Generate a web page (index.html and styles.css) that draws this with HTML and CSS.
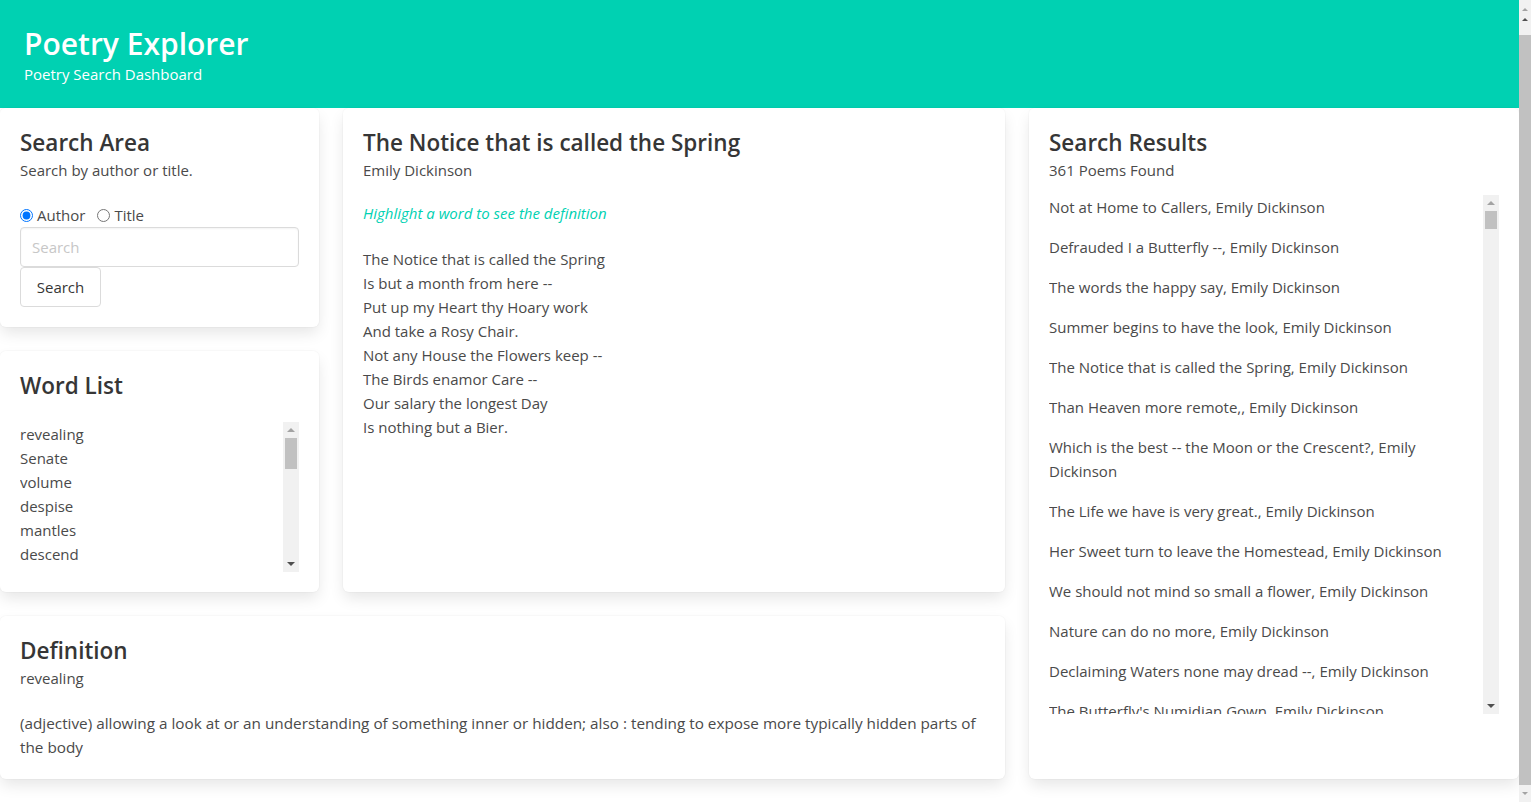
FILE: index.html
```html
<!DOCTYPE html>
<html lang="en">
<head>
<meta charset="utf-8">
<title>Poetry Explorer</title>
<link rel="stylesheet" href="styles.css">
</head>
<body>
<div class="page">
  <header class="hero">
    <h1 class="hero-title">Poetry Explorer</h1>
    <p class="hero-subtitle">Poetry Search Dashboard</p>
  </header>
  <main class="dashboard">
    <section class="box search-box">
      <h2 class="title">Search Area</h2>
      <p class="subtitle">Search by author or title.</p>
      <div class="radios">
        <label class="radio"><input type="radio" name="mode" checked> Author</label>
        <label class="radio"><input type="radio" name="mode"> Title</label>
      </div>
      <input class="input" type="text" placeholder="Search">
      <button class="button" type="button">Search</button>
    </section>

    <section class="box poem-box">
      <h2 class="title">The Notice that is called the Spring</h2>
      <p class="subtitle">Emily Dickinson</p>
      <p class="hint">Highlight a word to see the definition</p>
      <div class="poem">
        <div>The Notice that is called the Spring</div>
        <div>Is but a month from here --</div>
        <div>Put up my Heart thy Hoary work</div>
        <div>And take a Rosy Chair.</div>
        <div>Not any House the Flowers keep --</div>
        <div>The Birds enamor Care --</div>
        <div>Our salary the longest Day</div>
        <div>Is nothing but a Bier.</div>
      </div>
    </section>

    <section class="box results-box">
      <h2 class="title">Search Results</h2>
      <p class="subtitle">361 Poems Found</p>
      <div class="scroll-wrap results-wrap">
        <ul class="results">
          <li>Not at Home to Callers, Emily Dickinson</li>
          <li>Defrauded I a Butterfly --, Emily Dickinson</li>
          <li>The words the happy say, Emily Dickinson</li>
          <li>Summer begins to have the look, Emily Dickinson</li>
          <li>The Notice that is called the Spring, Emily Dickinson</li>
          <li>Than Heaven more remote,, Emily Dickinson</li>
          <li>Which is the best -- the Moon or the Crescent?, Emily Dickinson</li>
          <li>The Life we have is very great., Emily Dickinson</li>
          <li>Her Sweet turn to leave the Homestead, Emily Dickinson</li>
          <li>We should not mind so small a flower, Emily Dickinson</li>
          <li>Nature can do no more, Emily Dickinson</li>
          <li>Declaiming Waters none may dread --, Emily Dickinson</li>
          <li>The Butterfly's Numidian Gown, Emily Dickinson</li>
          <li>A Bird came down the Walk --, Emily Dickinson</li>
        </ul>
        <div class="vscroll">
          <span class="arrow"><span class="tri up light"></span></span>
          <span class="thumb results-thumb"></span>
          <span class="track-fill"></span>
          <span class="arrow"><span class="tri down"></span></span>
        </div>
      </div>
    </section>

    <section class="box words-box">
      <h2 class="title words-title">Word List</h2>
      <div class="scroll-wrap words-wrap">
        <ul class="words">
          <li>revealing</li>
          <li>Senate</li>
          <li>volume</li>
          <li>despise</li>
          <li>mantles</li>
          <li>descend</li>
          <li>summer</li>
          <li>crescent</li>
        </ul>
        <div class="vscroll">
          <span class="arrow"><span class="tri up light"></span></span>
          <span class="thumb words-thumb"></span>
          <span class="track-fill"></span>
          <span class="arrow"><span class="tri down"></span></span>
        </div>
      </div>
    </section>

    <section class="box definition-box">
      <h2 class="title">Definition</h2>
      <p class="subtitle">revealing</p>
      <p class="definition">(adjective) allowing a look at or an understanding of something inner or hidden; also : tending to expose more typically hidden parts of the body</p>
    </section>
  </main>
</div>
<div class="page-scroll">
  <span class="page-scroll-top">
    <span class="tri up small light"></span>
    <span class="tri up small"></span>
  </span>
  <span class="page-thumb"></span>
  <span class="page-scroll-bottom"><span class="tri down small light"></span></span>
</div>
</body>
</html>
```
FILE: styles.css
```css
body {
  margin: 0;
  background: #ffffff;
  font-family: "Open Sans", "Noto Sans", sans-serif;
  font-size: 15px;
  line-height: 24px;
  color: #4a4a4a;
  display: flex;
  align-items: flex-start;
}
.page {
  flex: 1;
  min-width: 0;
}
.hero {
  background: #00d1b2;
  color: #ffffff;
  padding: 24px 24px 22px;
  height: 108px;
  box-sizing: border-box;
}
.hero-title {
  margin: 0;
  font-size: 30px;
  line-height: 40px;
  font-weight: 600;
}
.hero-subtitle {
  margin: 0;
  font-size: 15px;
  line-height: 21px;
}
.dashboard {
  display: grid;
  grid-template-columns: 319fr 662fr 490fr;
  grid-template-rows: auto auto auto;
  column-gap: 24px;
  row-gap: 24px;
  padding-bottom: 40px;
}
.box {
  background: #ffffff;
  border-radius: 6px;
  box-shadow: 0 0.5em 1em -0.125em rgba(10, 10, 10, 0.1), 0 0 0 1px rgba(10, 10, 10, 0.02);
  padding: 20px;
  min-width: 0;
}
.search-box { grid-column: 1; grid-row: 1; }
.words-box { grid-column: 1; grid-row: 2; }
.poem-box { grid-column: 2; grid-row: 1 / span 2; }
.results-box { grid-column: 3; grid-row: 1 / span 3; }
.definition-box { grid-column: 1 / span 2; grid-row: 3; }

.title {
  margin: 0;
  font-size: 22.5px;
  line-height: 30px;
  font-weight: 600;
  color: #363636;
}
.subtitle {
  margin: 0;
  font-size: 15px;
  line-height: 24px;
  color: #4a4a4a;
}
.radios {
  margin-top: 21px;
  display: flex;
  gap: 12px;
  line-height: 24px;
}
.radio {
  display: inline-flex;
  align-items: center;
  gap: 4px;
}
.radio input {
  margin: 0;
  width: 13px;
  height: 13px;
}
.input {
  display: block;
  box-sizing: border-box;
  width: 100%;
  height: 40px;
  margin: 0;
  padding: 0 11px;
  border: 1px solid #dbdbdb;
  border-radius: 4px;
  font-family: inherit;
  font-size: 15px;
  color: #363636;
  box-shadow: inset 0 0.0625em 0.125em rgba(10, 10, 10, 0.05);
}
.input::placeholder {
  color: #c7c7c7;
}
.button {
  display: block;
  box-sizing: border-box;
  height: 40px;
  width: 81px;
  margin: 0;
  padding: 0;
  border: 1px solid #dbdbdb;
  border-radius: 4px;
  background: #ffffff;
  font-family: inherit;
  font-size: 15px;
  color: #363636;
}

/* scroll areas with drawn scrollbars */
.scroll-wrap {
  display: flex;
}
.words-wrap {
  height: 150px;
}
.results-wrap {
  height: 519px;
  margin-top: 13px;
}
.words,
.results {
  flex: 1;
  min-width: 0;
  list-style: none;
  margin: 0;
  padding: 0;
  overflow: hidden;
}
.words li {
  line-height: 24px;
}
.results li {
  margin-bottom: 16px;
  line-height: 24px;
}
.vscroll {
  width: 16px;
  flex: none;
  background: #f1f1f1;
  display: flex;
  flex-direction: column;
}
.arrow {
  height: 16px;
  flex: none;
  display: flex;
  align-items: center;
  justify-content: center;
}
.thumb {
  flex: none;
  margin: 0 2px;
  background: #c1c1c1;
}
.words-thumb { height: 31px; }
.results-thumb { height: 18px; }
.track-fill { flex: 1; }

.tri {
  width: 0;
  height: 0;
  border-left: 4px solid transparent;
  border-right: 4px solid transparent;
}
.tri.up { border-bottom: 4px solid #505050; }
.tri.down { border-top: 4px solid #505050; }
.tri.up.light { border-bottom-color: #a3a3a3; }
.tri.down.light { border-top-color: #a3a3a3; }
.tri.small {
  border-left-width: 3px;
  border-right-width: 3px;
}
.tri.small.up { border-bottom-width: 3px; }
.tri.small.down { border-top-width: 3px; }

.words-title {
  margin-bottom: 21px;
}
.hint {
  margin: 19px 0 0;
  font-style: italic;
  color: #00d1b2;
}
.poem {
  margin-top: 22px;
}
.definition {
  margin: 21px 0 0;
  font-size: 15.3px;
}

/* page scrollbar */
.page-scroll {
  width: 12px;
  flex: none;
  height: 802px;
  background: #f1f1f1;
  display: flex;
  flex-direction: column;
  align-items: center;
}
.page-scroll-top {
  height: 35px;
  flex: none;
  display: flex;
  flex-direction: column;
  align-items: center;
  justify-content: space-evenly;
  padding-bottom: 6px;
  box-sizing: border-box;
}
.page-thumb {
  flex: 1;
  width: 100%;
  background: #c1c1c1;
}
.page-scroll-bottom {
  height: 17px;
  flex: none;
  display: flex;
  align-items: center;
  justify-content: center;
}
```
